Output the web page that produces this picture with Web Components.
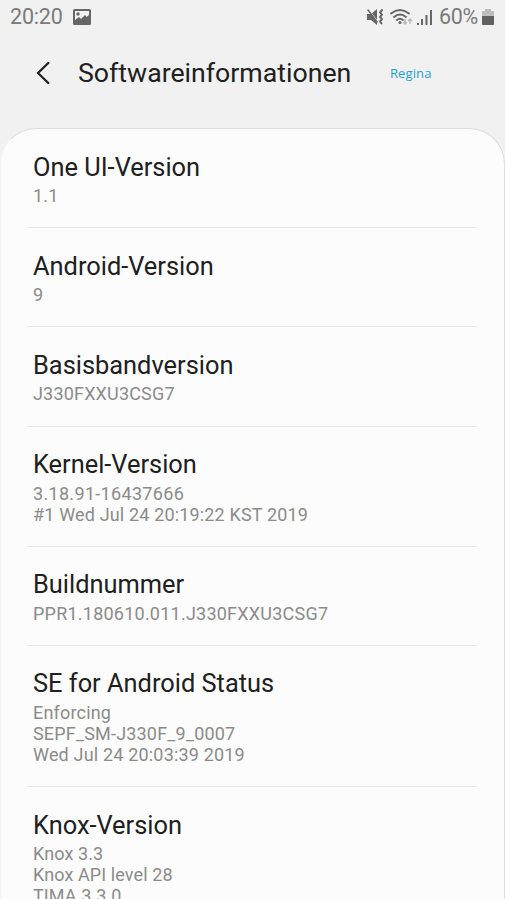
<!DOCTYPE html>
<html lang="de"><head><meta charset="utf-8"><title>Softwareinformationen</title>
<style>html,body{margin:0;height:899px;overflow:hidden;background:#f1f1f1;font-family:Roboto,sans-serif}</style></head><body>
<info-screen></info-screen>
<script>
class StatusBar extends HTMLElement{constructor(){super();this.attachShadow({mode:'open'}).innerHTML=`
<style>:host{display:flex;height:33px;align-items:center;padding:0 11px 0 10px;box-sizing:border-box;color:#7a7a7a;font-size:21.5px}
svg{display:block;flex:none}.time{width:53px;letter-spacing:-.2px}.pic{margin-left:10px}.gap{flex:1}.pct{width:39px;margin-left:6px;white-space:nowrap;letter-spacing:-.3px}.battery{margin-left:4px}</style>
<span class="time">20:20</span>
<svg class="pic" width="18" height="16" viewBox="0 0 18 16"><path fill="#666" fill-rule="evenodd" d="M1.500 0h15Q18 0 18 1.500v13q0 1.500-1.500 1.500h-15Q0 16 0 14.500v-13Q0 0 1.500 0zM2 2v9l4-3 2 2 4-4 1.500 2L16 6V2z"/><circle cx="5" cy="5" r="1.700" fill="#666"/></svg>
<span class="gap"></span>
<svg width="66" height="20" viewBox="0 0 66 20"><g fill="none" stroke="#666" stroke-linecap="round" stroke-linejoin="round">
<path d="M0 7h4l6-5v16l-6-5H0z" fill="#666" stroke="none"/><path d="M1 2l10 13" stroke="#f1f1f1" stroke-width="1.200"/><path d="M1 3l9 12" stroke-width="1.500"/><path d="M15 3l-2 2.300 2 2.300-2 2.300 2 2.300-2 2.300 1.500 2" stroke-width="2"/>
<path d="M24 6.500q9-7 18 0M27 10q6-5 12 0M30 13q3-2.500 6 0" stroke-width="1.900"/></g><circle cx="33" cy="15.500" r="1.600" fill="#666"/>
<path d="M38 12v5m-2-2l2 2 2-2M43 17v-5m-2 2l2-2 2 2" fill="none" stroke="#b5b5b5" stroke-width="1.300"/>
<path d="M50 16h2v2h-2zM54 12h2v6h-2zM58.500 8h2v10h-2zM63 3h2v15h-2z" fill="#666"/></svg>
<span class="pct">60%</span>
<svg class="battery" width="12" height="18" viewBox="0 0 12 18"><path fill="#bdbdbd" d="M3 1h6v2h2q1 0 1 1v5H0V4q0-1 1-1h2z"/><path fill="#606060" d="M0 8h12v8q0 1-1 1H1q-1 0-1-1z"/></svg>`}}
customElements.define('status-bar',StatusBar);
class TitleBar extends HTMLElement{constructor(){super();this.attachShadow({mode:'open'}).innerHTML=`
<style>:host{display:flex;height:95px;box-sizing:border-box;padding:0 0 15px 36px;align-items:center;color:#202020;font-size:26.7px}
h1{font:inherit;margin:0 0 0 28px;width:312px}small{font:13px "Open Sans",sans-serif;letter-spacing:.1px;color:#24a0ce}</style>
<svg width="14" height="22" viewBox="0 0 14 22"><path d="M12.300 1L2 11l10.300 10" fill="none" stroke="#202020" stroke-width="2.200" stroke-linecap="round"/></svg>
<h1><slot></slot></h1><small><slot name="tag"></slot></small>`}}
customElements.define('title-bar',TitleBar);
class InfoRow extends HTMLElement{constructor(){super();this.attachShadow({mode:'open'}).innerHTML=`
<style>:host{display:block;padding:19.500px 6px 20.2px;border-bottom:1px solid #e6e6e6}h2{font-size:25.4px;line-height:36px;font-weight:400;margin:0;color:#202020}
div{font-size:18px;line-height:21px;letter-spacing:var(--track,.18px);color:#8b8b8b;white-space:pre-line;padding:.5px 0 1px}</style><h2></h2><div><slot></slot></div>`}
connectedCallback(){this.shadowRoot.querySelector('h2').textContent=this.getAttribute('label')}}
customElements.define('info-row',InfoRow);
class InfoScreen extends HTMLElement{constructor(){super();this.attachShadow({mode:'open'}).innerHTML=`
<style>:host{display:block}section{height:771px;overflow:hidden;box-sizing:border-box;padding:0 27px 0 26px;background:#fcfcfc;border:1px solid #ddd;border-bottom:0;border-left-color:#f4f4f4;border-radius:36px 36px 0 0}</style>
<status-bar></status-bar><title-bar>Softwareinformationen<span slot="tag">Regina</span></title-bar>
<section><info-row label="One UI-Version">1.1</info-row><info-row label="Android-Version">9</info-row><info-row label="Basisbandversion">J330FXXU3CSG7</info-row><info-row style="--track:.16px" label="Kernel-Version"><span style="letter-spacing:.32px">3.18.91-16437666</span>
#1 Wed Jul 24 20:19:22 KST 2019</info-row><info-row style="--track:.23px" label="Buildnummer">PPR1.180610.011.J330FXXU3CSG7</info-row><info-row label="SE for Android Status">Enforcing
SEPF_SM-J330F_9_0007
Wed Jul 24 20:03:39 2019</info-row><info-row style="--track:.1px" label="Knox-Version">Knox 3.3
Knox API level 28
TIMA 3.3.0</info-row></section>`}}
customElements.define('info-screen',InfoScreen);
</script></body></html>
